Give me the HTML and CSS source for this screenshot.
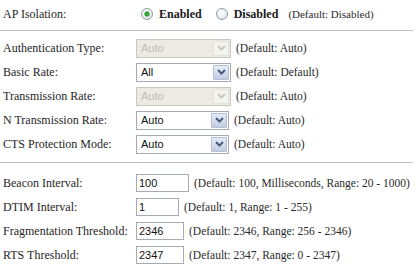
FILE: index.html
```html
<html lang="en">
  <head>
    <meta charset="UTF-8" />
    <title>Wireless Advanced</title>
    <link rel="stylesheet" href="styles.css">
  </head>

  <body>
    <div class="page">
      <div class="row">
        <span class="label">AP Isolation:</span>
        <div class="field">
          <label class="radio"><input type="radio" name="isolation" checked /><b>Enabled</b></label>
          <label class="radio"><input type="radio" name="isolation" /><b>Disabled</b></label>
          <span class="hint hintWide">(Default: Disabled)</span>
        </div>
      </div>

      <hr class="divider" />

      <div class="section">
        <div class="row">
          <span class="label">Authentication Type:</span>
          <div class="field">
            <span class="select wide disabled">
              <select disabled><option>Auto</option></select>
              <span class="arrow"><svg width="9" height="6" viewBox="0 0 9 6"><path d="M1 1 L4.5 4.5 L8 1" /></svg></span>
            </span>
            <span class="hint">(Default: Auto)</span>
          </div>
        </div>
        <div class="row">
          <span class="label">Basic Rate:</span>
          <div class="field">
            <span class="select wide">
              <select><option>All</option><option>1-2 Mbps</option></select>
              <span class="arrow"><svg width="9" height="6" viewBox="0 0 9 6"><path d="M1 1 L4.5 4.5 L8 1" /></svg></span>
            </span>
            <span class="hint">(Default: Default)</span>
          </div>
        </div>
        <div class="row">
          <span class="label">Transmission Rate:</span>
          <div class="field">
            <span class="select wide disabled">
              <select disabled><option>Auto</option></select>
              <span class="arrow"><svg width="9" height="6" viewBox="0 0 9 6"><path d="M1 1 L4.5 4.5 L8 1" /></svg></span>
            </span>
            <span class="hint">(Default: Auto)</span>
          </div>
        </div>
        <div class="row">
          <span class="label">N Transmission Rate:</span>
          <div class="field">
            <span class="select">
              <select><option>Auto</option></select>
              <span class="arrow"><svg width="9" height="6" viewBox="0 0 9 6"><path d="M1 1 L4.5 4.5 L8 1" /></svg></span>
            </span>
            <span class="hint">(Default: Auto)</span>
          </div>
        </div>
        <div class="row">
          <span class="label">CTS Protection Mode:</span>
          <div class="field">
            <span class="select">
              <select><option>Auto</option><option>Disabled</option></select>
              <span class="arrow"><svg width="9" height="6" viewBox="0 0 9 6"><path d="M1 1 L4.5 4.5 L8 1" /></svg></span>
            </span>
            <span class="hint">(Default: Auto)</span>
          </div>
        </div>
      </div>

      <hr class="divider lower" />

      <div class="section">
        <div class="row">
          <span class="label">Beacon Interval:</span>
          <div class="field">
            <input class="text beacon" type="text" value="100" />
            <span class="hint">(Default: 100, Milliseconds, Range: 20 - 1000)</span>
          </div>
        </div>
        <div class="row">
          <span class="label">DTIM Interval:</span>
          <div class="field">
            <input class="text dtim" type="text" value="1" />
            <span class="hint">(Default: 1, Range: 1 - 255)</span>
          </div>
        </div>
        <div class="row">
          <span class="label">Fragmentation Threshold:</span>
          <div class="field">
            <input class="text threshold" type="text" value="2346" />
            <span class="hint">(Default: 2346, Range: 256 - 2346)</span>
          </div>
        </div>
        <div class="row">
          <span class="label">RTS Threshold:</span>
          <div class="field">
            <input class="text threshold" type="text" value="2347" />
            <span class="hint">(Default: 2347, Range: 0 - 2347)</span>
          </div>
        </div>
      </div>
    </div>
  </body>
</html>
```

FILE: styles.css
```css
body {
  margin: 0;
  background: #fff;
  color: #262626;
  font-family: "Liberation Serif", "Times New Roman", serif;
  font-size: 12px;
}

.page {
  padding-top: 2px;
}

.row {
  display: flex;
  align-items: center;
  height: 24px;
  padding-left: 3px;
}

.label {
  flex: none;
  width: 133px;
}

.field {
  display: flex;
  align-items: center;
  gap: 5px;
  white-space: nowrap;
}

.hint {
  font-size: 11.5px;
  color: #2a2a2a;
}

.hintWide {
  font-size: 11px;
  margin-left: 5px;
}

.divider {
  border: 0;
  border-top: 1px solid #c0c0c0;
  margin: 4px 7px 5px 0;
}

.divider.lower {
  margin: 6px 7px 8px 0;
}

/* radio buttons */
.radio {
  display: flex;
  align-items: center;
  gap: 6px;
  cursor: pointer;
}

.radio:first-child {
  margin-left: 5px;
  margin-right: 9px;
}

.radio input {
  appearance: none;
  -webkit-appearance: none;
  margin: 0;
  width: 12px;
  height: 12px;
  border-radius: 50%;
  border: 1px solid #8e9cab;
  background: radial-gradient(circle at 40% 35%, #ffffff 0, #f1f1f1 45%, #d4d8dc 100%);
}

.radio input:checked {
  background:
    radial-gradient(circle at 50% 50%, #3fb63f 0, #2f9b2f 2.2px, rgba(255, 255, 255, 0) 3px),
    radial-gradient(circle at 40% 35%, #ffffff 0, #f1f1f1 45%, #d4d8dc 100%);
}

.radio b {
  color: #1a1a1a;
}

/* drop-down boxes */
.select {
  display: inline-flex;
  align-items: center;
  box-sizing: border-box;
  width: 93px;
  height: 19px;
  border: 1px solid #a5acb2;
  background: #fff;
}

.select.wide {
  width: 95px;
}

.select select {
  appearance: none;
  -webkit-appearance: none;
  flex: 1;
  min-width: 0;
  height: 100%;
  border: 0;
  padding: 0 0 0 4px;
  background: transparent;
  color: #111;
  font-family: "Liberation Sans", Arial, sans-serif;
  font-size: 11px;
  outline: none;
}

.select .arrow {
  display: flex;
  align-items: center;
  justify-content: center;
  box-sizing: border-box;
  width: 16px;
  height: 15px;
  margin-right: 1px;
  border: 1px solid #b4c0d8;
  border-radius: 1px;
  background: linear-gradient(#e6ecf7, #c3cde2);
}

.select .arrow path {
  fill: none;
  stroke: #4a5b7e;
  stroke-width: 2;
}

.select.disabled {
  background: #ebebe4;
  border-color: #c9c7ba;
}

.select.disabled select {
  color: #aca899;
}

.select.disabled .arrow {
  background: #f3f3ef;
  border-color: #e2e2da;
}

.select.disabled .arrow path {
  stroke: #c9c7ba;
}

/* text fields */
.text {
  box-sizing: border-box;
  height: 18px;
  margin: 0;
  padding: 0 0 0 2px;
  border: 1px solid #a5acb2;
  font-family: "Liberation Sans", Arial, sans-serif;
  font-size: 11px;
  color: #111;
}

.text.beacon {
  width: 53px;
}

.text.dtim {
  width: 43px;
}

.text.threshold {
  width: 48px;
}
```
